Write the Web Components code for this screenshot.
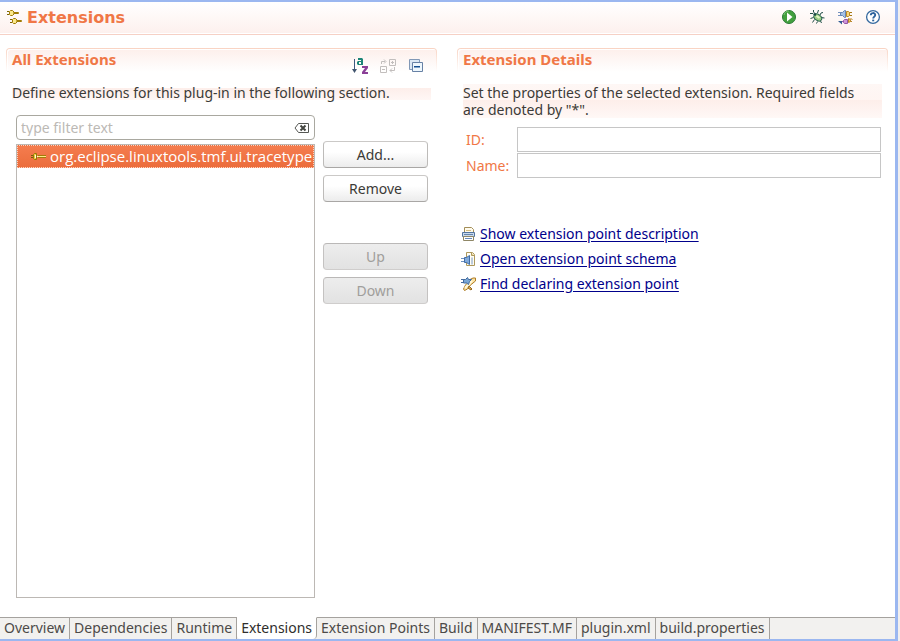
<!DOCTYPE html>
<html lang="en">
<head>
<meta charset="utf-8">
<title>Extensions</title>
<style>
html, body { height: 100%; margin: 0; }
body { background: #f1efee; font: 14px/17px "Noto Sans", "Open Sans", sans-serif; color: #3c3b37; }
</style>
</head>
<body>
<plugin-editor></plugin-editor>
<script>
const define = (name, markup, setup) => {
  const template = document.createElement('template');
  template.innerHTML = markup;
  customElements.define(name, class extends HTMLElement {
    connectedCallback() {
      if (this.shadowRoot) return;
      this.attachShadow({ mode: 'open' }).append(template.content.cloneNode(true));
      if (setup) setup(this, this.shadowRoot);
    }
  });
};

const ICONS = {
  plugs: '<g fill="#fbe98c" stroke="#a07c06"><path d="M0 1.500h2M0 4.500h2M3 9.500h2M3 12.500h2" stroke="#7d6505"/><path d="M2.500 1.500l1-1h2l1.500 1.500v2l-1.500 1.500h-2l-1-1z"/><path d="M7 2.500h4.500v1H7z"/><path d="M5.500 9.500l1-1h2l1.500 1.500v2l-1.500 1.500h-2l-1-1z"/><path d="M10 10.500h4.500v1H10z"/></g>',
  plug: '<path d="M0 6.500h3M0 8.500h3" stroke="#75610a"/><path d="M2.500 5.500l1-1h2v6h-2l-1-1z" fill="#eacb3b" stroke="#967608"/><path d="M4 6h1v3H4zM6 7h1v1H6z" fill="#fffbd6"/><path d="M7 6.500h8M7 8.500h8" stroke="#a37b09"/><path d="M7 7h8v1H7z" fill="#ffe98b"/>',
  run: '<circle cx="8" cy="8" r="6.500" fill="#42a03e" stroke="#2a7a36"/><path d="M3 6a5 5 0 0 1 5-4" fill="none" stroke="#7cc475"/><path d="M6 3.500v9l5.500-4.500z" fill="#fff"/>',
  debug: '<path d="M4.500 1v2l2 2M9.500 1l-1 3M1 4.500h3l2 2M1.500 9.500l3-1M3.500 13.500l2-3M7.500 14.500l1-2M12.500 14l-1-2M12 8.500l3.500 .5M11 6l1-2 2-.500" fill="none" stroke="#234f49"/><ellipse cx="8.800" cy="8.500" rx="4.300" ry="3" transform="rotate(35 8.800 8.500)" fill="#9fcf86" stroke="#27604f"/><path d="M7.500 7l3 2" stroke="#e6f6c8" stroke-width="2"/><path d="M5 5l2 1" stroke="#174943" stroke-width="2"/>',
  plugins: '<path d="M1 3.500h3M1 6.500h3" stroke="#7491be"/><path d="M3.500 3.500h2l2-2h1v7h-1l-2-2h-2z" fill="#a5c1e5" stroke="#6684b4"/><path d="M9.500 2.500h2l1 1v3l-1 1h-2z" fill="#f8d67c" stroke="#bd8b25"/><path d="M12.500 3.500H15M12.500 6.500H15" stroke="#a67811"/><path d="M1 12h4v3.500z" fill="#315c94"/><path d="M5 12.500h2" stroke="#9356a6"/><path d="M7.500 10.500h3v4h-3l-1-1v-2z" fill="#cc94d9" stroke="#9356a6"/><path d="M11.500 9.500l2 1v2l-2 1z" fill="#f2cc61" stroke="#b88526"/><path d="M13.500 9.500l2 1M13.500 12.500H15" stroke="#b88526"/>',
  help: '<circle cx="8" cy="8" r="6.400" fill="#fff" stroke="#35699f" stroke-width="1.300"/><path d="M5.800 6.200C5.800 3.400 10.200 3.400 10.200 6c0 1.600-2 1.700-2 3.600" fill="none" stroke="#2c629c" stroke-width="1.900"/><path d="M7.200 10.600h2v1.700h-2z" fill="#2c629c"/>',
  sort: '<path d="M2.500 1v12" stroke="#3d5a80"/><path d="M0 11h5l-2.500 4z" fill="#42556f"/><path d="M6 0h4l1 1v6H6L5 6V4l1-1h3V2H6zM7 4v2h2V4z" fill="#1c8577" fill-rule="evenodd"/><path d="M10 8h6v2l-3 4h3v2h-6v-2l3-4h-3z" fill="#8b3f97"/>',
  expand: '<g fill="none" stroke="#c2bebd"><path d="M9.500 1.500h6v6h-6zM.500 8.500h6v6h-6zM12.500 3v3M11 4.500h3M2 11.500h3M1.500 6V3.500H5M4 1.500l2 2-2 2M14.500 9v3.500H10M12 10.500l-2 2 2 2"/></g>',
  collapse: '<path d="M1.500 1.500h10v10h-10z" fill="#dce8f4" stroke="#8198b6"/><path d="M4.500 4.500h10v9h-10z" fill="#eef7fd" stroke="#6781a5"/><path d="M6 8h6v1.500H6z" fill="#154e91"/>',
  clear: '<path d="M4.500 3.500h10v9h-10L1 8z" fill="#fff" stroke="#555753"/><path d="M6.500 5.500l5 5M11.500 5.500l-5 5" stroke="#444641" stroke-width="2"/>',
  page: '<path d="M3.500 6V1.500h7l2 2V6" fill="#fffbed" stroke="#a38e59"/><path d="M5 4.500h5" stroke="#d2bd83"/><path d="M1.500 6.500h12v4h-12z" fill="#c8d9ec" stroke="#53759f"/><path d="M3 8.500h9" stroke="#6685ad"/><path d="M2.500 10.500h10v4h-10z" fill="#fff" stroke="#8f8766"/><path d="M4 12.500h7" stroke="#668abb"/>',
  schema: '<path d="M5.500 1.500h6l2 2v11h-8z" fill="#fffdf4" stroke="#ad985b"/><path d="M10.500 1.500v3h3" fill="#ecdca6" stroke="#ad985b"/><path d="M0 7.500h4M0 10.500h4" stroke="#6b8fc0"/><path d="M3.500 6.500h2l3-2v9l-3-2h-2z" fill="#81aadb" stroke="#406da6"/><path d="M11 6.500v7" stroke="#7898c2"/>',
  find: '<path d="M8 4l4-2 2.500 0v3l-5 4-3 4-3 1.500-1-1.500 2-4 3-3z" fill="#fce3a1" stroke="#ad7b24"/><path d="M4 12l7-7" stroke="#fff8db" stroke-width="2"/><path d="M0 3.500h3M0 6.500h3" stroke="#456aa0"/><path d="M2.500 3.500h2l2-2 1 2h3l-2 2-1 3-2-1.500h-3z" fill="#78a6d5" stroke="#426a9d"/><path d="M8 10l3 3-1 1-3-2z" fill="#d9ac55" stroke="#986b20"/>'
};

customElements.define('ui-icon', class extends HTMLElement {
  static observedAttributes = ['name'];
  attributeChangedCallback() {
    if (!this.shadowRoot) this.attachShadow({ mode: 'open' });
    this.shadowRoot.innerHTML = `<style>
:host { display: block; width: 16px; height: 16px; flex: none; }
svg { display: block; width: 100%; height: 100%; overflow: visible; }
</style><svg viewBox="0 0 16 16" aria-hidden="true">${ICONS[this.getAttribute('name')]}</svg>`;
  }
});

define('tool-button', `<style>
:host { display: block; }
button { display: block; margin: 0; padding: 0; border: 0; background: none; }
</style><button type="button"><ui-icon></ui-icon></button>`, (host, root) => {
  root.querySelector('ui-icon').setAttribute('name', host.getAttribute('icon'));
  const b = root.querySelector('button');
  b.setAttribute('aria-label', host.getAttribute('label'));
  b.disabled = host.hasAttribute('disabled');
});

define('form-heading', `<style>
:host { display: flex; align-items: center; gap: 4px; height: 32px; padding: 0 14px 0 7px; background: linear-gradient(#fff, #fdf0ed); border-bottom: 1px solid #f6d0c5; box-shadow: inset 0 -1px #fff; }
h1 { flex: 1; margin: 0; font: bold 16px/20px "DejaVu Sans", sans-serif; color: #f07746; }
nav { display: flex; gap: 12px; padding-bottom: 2px; }
</style><ui-icon name="plugs"></ui-icon><h1><slot></slot></h1><nav><slot name="tools"></slot></nav>`);

define('form-section', `<style>
:host { display: flex; flex-direction: column; min-width: 0; }
header { display: flex; align-items: flex-start; height: 23px; padding: 0 12px 0 5px; border-radius: 4px 4px 0 0; background: linear-gradient(#fdefeb, #fff) padding-box, linear-gradient(#f9d3c2, #fff) border-box; border: 1px solid transparent; border-width: 1px 1px 0; box-shadow: inset 1px 1px #fff; }
h2 { flex: 1; margin: 0; padding-top: 1px; font-size: 15px; line-height: 18px; color: #f07746; }
.tools { display: flex; gap: 12px; padding-top: 9px; }
p { margin: 12px 6px 0; background: linear-gradient(#fff 4px, #fdeeea 4px, #fff7f5 16px, #fff 16px); }
:host([lines="2"]) p { padding-right: 12px; background: linear-gradient(#fef7f5, #fff5f2 16px, #fdeeea 16px, #fff8f6 34px); }
</style><header><h2><slot name="title"></slot></h2><div class="tools"><slot name="tools"></slot></div></header>
<p><slot name="description"></slot></p><slot></slot>`);

define('push-button', `<style>
:host { display: block; }
button { display: block; box-sizing: border-box; width: 100%; height: 27px; padding: 0; border: 1px solid; border-color: #cbc9c7 #bdbbb9 #a9a7a5; border-radius: 4px; background: linear-gradient(#fff 40%, #ececec); font: inherit; color: #3c3b37; }
button:disabled { background: linear-gradient(#ededed, #e2e2e2); border-color: #bab8b7 #c4c2c1 #cfcdcc; color: #a09e9b; }
</style><button type="button"><slot></slot></button>`, (host, root) => {
  root.querySelector('button').disabled = host.hasAttribute('disabled');
});

define('extension-list', `<style>
:host { display: flex; flex-direction: column; gap: 4px; min-width: 0; }
.filter { display: flex; align-items: center; box-sizing: border-box; height: 25px; padding: 0 4px; border: 1px solid #a9a8a0; border-radius: 4px; background: #fff; }
input { flex: 1; min-width: 0; padding: 0; border: 0; outline: 0; background: none; font: inherit; color: #3c3b37; }
input::placeholder { color: #bcb9b5; opacity: 1; }
.filter button { padding: 0; border: 0; background: none; display: block; }
ul { flex: 1; margin: 0; padding: 0; list-style: none; border: 1px solid #bcb8b4; }
li { display: flex; align-items: center; gap: 3px; box-sizing: border-box; height: 23px; padding-left: 13px; border: 1px dotted #fbd3c0; background: linear-gradient(#f57c4e, #eb6d3c); color: #fff; white-space: nowrap; overflow: hidden; font-family: "Open Sans", sans-serif; font-size: 15px; }
</style><div class="filter"><input type="text" placeholder="type filter text" aria-label="Filter"><button type="button" aria-label="Clear"><ui-icon name="clear"></ui-icon></button></div>
<ul><li><ui-icon name="plug"></ui-icon><span>org.eclipse.linuxtools.tmf.ui.tracetype</span></li></ul>`);

define('extension-browser', `<style>
:host { flex: 1; display: grid; grid-template-columns: minmax(0, 1fr) 105px; gap: 8px; padding: 14px 9px 0 10px; }
.actions { display: flex; flex-direction: column; gap: 7px; padding-top: 26px; }
.apart { margin-top: 34px; }
</style><extension-list></extension-list>
<div class="actions"><push-button>Add...</push-button><push-button>Remove</push-button><push-button class="apart" disabled>Up</push-button><push-button disabled>Down</push-button></div>`);

define('detail-fields', `<style>
:host { display: grid; grid-template-columns: 44px minmax(0, 1fr); gap: 1px 7px; align-items: center; padding: 9px 7px 0 9px; color: #f07746; }
input { box-sizing: border-box; width: 100%; height: 25px; border: 1px solid #c6c6c6; background: #fff; font: inherit; }
</style><label for="id">ID:</label><input id="id" type="text"><label for="name">Name:</label><input id="name" type="text">`);

define('detail-link', `<style>
:host { display: flex; align-items: center; gap: 3px; height: 17px; }
a { color: #00008b; text-decoration: underline; text-underline-offset: 2px; }
</style><ui-icon></ui-icon><a href="#"><slot></slot></a>`, (host, root) => {
  root.querySelector('ui-icon').setAttribute('name', host.getAttribute('icon'));
});

define('detail-links', `<style>
:host { display: flex; flex-direction: column; gap: 8px; padding: 47px 0 0 4px; }
</style><slot></slot>`);

define('page-tab', `<style>
:host { display: block; border-right: 1px solid #a5a29e; border-top: 1px solid #a5a29e; }
:host([selected]) { background: #fff; border-top-color: #fff; border-radius: 0 0 4px 4px; }
button { display: block; height: 20px; padding: 0 4px 1px; border: 0; background: none; font: inherit; color: #4c4a48; white-space: nowrap; }
:host([selected]) button { color: #2f2e2c; }
</style><button type="button" role="tab"><slot></slot></button>`, (host, root) => {
  root.querySelector('button').setAttribute('aria-selected', host.hasAttribute('selected'));
});

define('page-tabs', `<style>
:host { display: flex; height: 22px; background: #f2f1ef; }
.rest { flex: 1; border-top: 1px solid #a5a29e; }
</style><slot></slot><div class="rest"></div>`);

define('plugin-editor', `<style>
:host { display: flex; flex-direction: column; box-sizing: border-box; min-height: 100%; margin-right: 2px; border: solid #9bb7f0; border-width: 2px 3px 2px 0; background: #fff; }
main { flex: 1; display: grid; grid-template-columns: minmax(0, 1fr) minmax(0, 1fr); gap: 20px; padding: 13px 7px 19px 6px; }
</style>
<form-heading>Extensions
<tool-button slot="tools" icon="run" label="Run"></tool-button>
<tool-button slot="tools" icon="debug" label="Debug"></tool-button>
<tool-button slot="tools" icon="plugins" label="Export"></tool-button>
<tool-button slot="tools" icon="help" label="Help"></tool-button>
</form-heading>
<main>
<form-section><span slot="title">All Extensions</span>
<tool-button slot="tools" icon="sort" label="Sort"></tool-button>
<tool-button slot="tools" icon="expand" label="Expand" disabled></tool-button>
<tool-button slot="tools" icon="collapse" label="Collapse all"></tool-button>
<span slot="description">Define extensions for this plug-in in the following section.</span>
<extension-browser></extension-browser></form-section>
<form-section lines="2"><span slot="title">Extension Details</span>
<span slot="description">Set the properties of the selected extension. Required fields are denoted by "*".</span>
<detail-fields></detail-fields>
<detail-links><detail-link icon="page">Show extension point description</detail-link><detail-link icon="schema">Open extension point schema</detail-link><detail-link icon="find">Find declaring extension point</detail-link></detail-links>
</form-section>
</main>
<page-tabs role="tablist"><page-tab>Overview</page-tab><page-tab>Dependencies</page-tab><page-tab>Runtime</page-tab><page-tab selected>Extensions</page-tab><page-tab>Extension Points</page-tab><page-tab>Build</page-tab><page-tab>MANIFEST.MF</page-tab><page-tab>plugin.xml</page-tab><page-tab>build.properties</page-tab></page-tabs>`);
</script>
</body>
</html>
